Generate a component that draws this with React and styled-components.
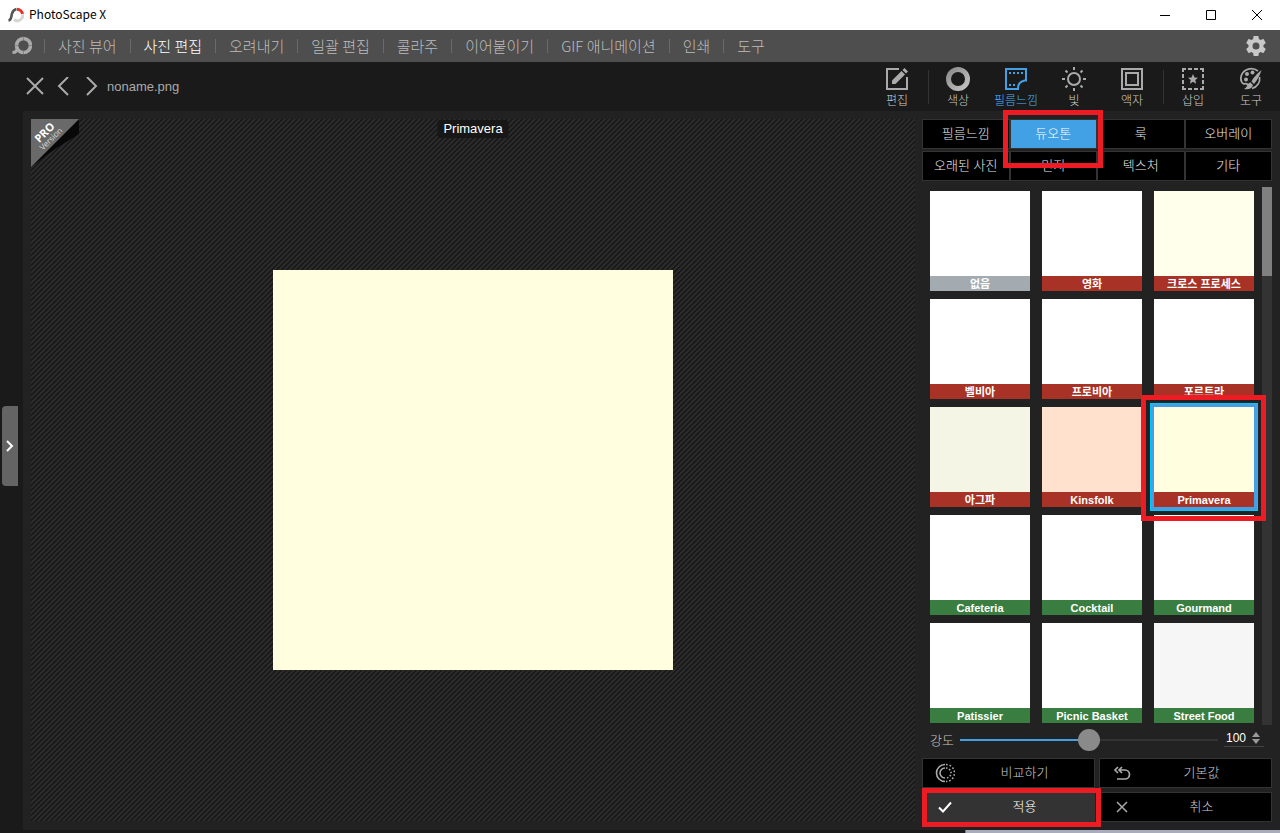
import React, { useState } from 'react'
import styled, { createGlobalStyle, css } from 'styled-components'

const GlobalStyle = createGlobalStyle`
*{
box-sizing:border-box;
}
body{
margin:0;
background:#1a1a1a;
color:#aaa;
font-family:"Liberation Sans","Noto Sans CJK KR",sans-serif;
font-size:13px;
}
button,input{
margin:0;
padding:0;
border:none;
background:none;
color:inherit;
font:inherit;
}
button{
cursor:pointer;
}
svg{
display:block;
}
`;

const Window = styled.div`
min-height:100vh;
display:flex;
flex-direction:column;
`;

const TitleBar = styled.header`
height:30px;
display:flex;
align-items:center;
background:#fff;
color:#000;
padding-left:8px;
`;
const Title = styled.h1`
flex:1;
margin:0 0 0 5px;
font-family:"Noto Sans CJK KR",sans-serif;
font-size:12px;
font-weight:400;
line-height:28px;
height:30px;
`;
const WindowButton = styled.button`
width:46px;
height:30px;
display:flex;
justify-content:center;
align-items:center;
`;

const MenuBar = styled.nav`
height:32px;
display:flex;
align-items:center;
background:#4e4e4e;
padding:0 14px 0 12px;
`;
const MenuLogo = styled.span`
width:32px;
`;
const MenuItem = styled.a`
border-left:1px solid #6a6a6a;
padding:0 13px;
font-family:"Noto Sans CJK KR",sans-serif;
font-size:15px;
font-weight:300;
line-height:14px;
white-space:nowrap;
text-decoration:none;
color:${props => props.$active ? "#fff" : "#bcbcbc"};
`;
const SettingsButton = styled.button`
margin-left:auto;
`;

const Workspace = styled.div`
position:relative;
flex:1;
display:flex;
flex-direction:column;
`;
const ToolBar = styled.div`
height:49px;
display:flex;
align-items:center;
`;
const FileNav = styled.div`
flex:1;
display:flex;
align-items:center;
padding-left:21px;
`;
const NavButton = styled.button`
width:28px;
height:24px;
display:flex;
justify-content:center;
align-items:center;
`;
const FileName = styled.span`
margin-left:2px;
`;
const Tool = styled.button`
width:58px;
height:49px;
padding-top:5px;
display:flex;
flex-direction:column;
align-items:center;
gap:3px;
font-size:12px;
font-weight:300;
line-height:14px;
color:${props => props.$active ? "#42a0e4" : "#aaa"};
`;
const ToolName = styled.span`
color:${props => props.$active ? "#4cb0f8" : "#ccc"};
`;
const ToolDivider = styled.span`
width:1px;
height:34px;
margin-left:2px;
background:#333;
`;

const Content = styled.main`
flex:1;
display:flex;
margin-left:23px;
background:#222;
`;
const StageWrap = styled.section`
flex:1;
display:flex;
padding:8px 7px 9px 8px;
`;
const Stage = styled.div`
position:relative;
flex:1;
display:flex;
justify-content:center;
align-items:center;
background:linear-gradient(135deg,#181818 0 25%,#2a2a2a 25% 55%,#181818 55% 75%,#2a2a2a 75%) 0 0/5px 5px;
`;
const Photo = styled.div`
width:400px;
height:400px;
background:#ffffdf;
`;
const FilterTag = styled.span`
position:absolute;
top:1px;
left:50%;
transform:translateX(-50%);
padding:0 6px;
border-radius:3px;
background:#171717;
color:#fff;
line-height:18px;
`;
const ProBadge = styled.div`
position:absolute;
top:0;
left:0;
`;
const DrawerHandle = styled.button`
position:absolute;
top:50%;
left:2px;
width:16px;
height:80px;
margin-top:-40px;
display:flex;
justify-content:center;
align-items:center;
border-radius:4px 0 0 4px;
background:#646464;
`;

const Panel = styled.aside`
width:358px;
padding:8px 8px 8px 0;
display:flex;
flex-direction:column;
`;
const Tabs = styled.div`
display:grid;
grid-template-columns:repeat(4,1fr);
row-gap:2px;
`;
const Tab = styled.button`
position:relative;
height:30px;
border:1px solid #333;
background:${props => props.$active ? "#42a0e4" : "#000"};
color:${props => props.$active ? "#fff" : "#e8e8e8"};
font-weight:300;
line-height:26px;
`;
const marks = {
  tab: css`inset:-10px -7px -20px -8px;`,
  filter: css`inset:-12px -12px -14px -13px;`,
  apply: css`inset:-5px -7px -6px -1px;`,
};
const Mark = styled.span`
position:absolute;
z-index:2;
border:5px solid #ed1c24;
pointer-events:none;
${props => marks[props.$kind]}
`;

const FilterArea = styled.div`
flex:1;
display:flex;
justify-content:space-between;
margin-top:6px;
`;
const FilterGrid = styled.div`
display:grid;
grid-template-columns:repeat(3,100px);
grid-auto-rows:100px;
gap:8px 12px;
padding:4px 0 2px 8px;
`;
const Filter = styled.button`
position:relative;
display:flex;
flex-direction:column;
background:${props => props.$color};
${props => props.$active && css`
box-shadow:0 0 0 3px #42a0e4,0 0 0 4px #00c8ff;
`}
`;
const FilterName = styled.span`
width:100%;
height:15px;
margin-top:auto;
background:${props => props.$tone};
color:#fff;
font-size:11px;
font-weight:700;
line-height:16px;
`;
const ScrollTrack = styled.div`
width:10px;
background:#333;
`;
const ScrollThumb = styled.div`
height:89px;
background:#808080;
`;

const AmountRow = styled.div`
height:33px;
display:flex;
align-items:center;
padding:0 8px 4px;
`;
const AmountLabel = styled.label`
width:30px;
color:#c4c4c4;
font-weight:300;
`;
const Slider = styled.input`
flex:1;
min-width:0;
height:22px;
appearance:none;
background:linear-gradient(to right,#42a0e4 50%,#333 50%) center/100% 2px no-repeat;
&::-webkit-slider-thumb{
appearance:none;
width:22px;
height:22px;
border-radius:50%;
background:#8a8a8a;
}
`;
const Stepper = styled.div`
width:40px;
height:18px;
margin:0 0 3px 6px;
display:flex;
align-items:center;
border-bottom:1px solid #444;
`;
const Amount = styled.input`
width:28px;
padding-left:2px;
color:#fff;
font-size:12px;
appearance:textfield;
&::-webkit-inner-spin-button{
appearance:none;
}
`;
const StepButtons = styled.div`
display:grid;
gap:2px;
`;

const Actions = styled.div`
display:grid;
grid-template-columns:1fr 1fr;
gap:4px;
`;
const Action = styled.button`
position:relative;
height:30px;
display:flex;
align-items:center;
padding-left:12px;
border:1px solid #333;
background:${props => props.$active ? "#333" : "#000"};
color:${props => props.$active ? "#fff" : "#aaa"};
font-weight:300;
line-height:26px;
`;
const ActionText = styled.span`
flex:1;
color:${props => props.$active ? "#fff" : "#ccc"};
`;

const Desktop = styled.footer`
height:3px;
display:flex;
background:#1a1a1a;
`;
const OtherWindow = styled.div`
width:315px;
margin-left:auto;
border-left:1px solid #777;
background:#a9adbb;
`;

const menu = ["사진 뷰어", "사진 편집", "오려내기", "일괄 편집", "콜라주", "이어붙이기", "GIF 애니메이션", "인쇄", "도구"];
const tabs = ["필름느낌", "듀오톤", "룩", "오버레이", "오래된 사진", "먼지", "텍스처", "기타"];

const RED = "#a93226";
const GREEN = "#3a7d40";
const filters = [
  { name: "없음", color: "#fff", tone: "#a4abb0" },
  { name: "영화", color: "#fff", tone: RED },
  { name: "크로스 프로세스", color: "#ffffec", tone: RED },
  { name: "벨비아", color: "#fff", tone: RED },
  { name: "프로비아", color: "#fff", tone: RED },
  { name: "포르트라", color: "#fff", tone: RED },
  { name: "아그파", color: "#f5f5e6", tone: RED },
  { name: "Kinsfolk", color: "#ffe1ce", tone: RED },
  { name: "Primavera", color: "#ffffdf", tone: RED },
  { name: "Cafeteria", color: "#fff", tone: GREEN },
  { name: "Cocktail", color: "#fff", tone: GREEN },
  { name: "Gourmand", color: "#fff", tone: GREEN },
  { name: "Patissier", color: "#fff", tone: GREEN },
  { name: "Picnic Basket", color: "#fff", tone: GREEN },
  { name: "Street Food", color: "#f6f6f6", tone: GREEN },
];

const Icon = ({ size = 24, width = 2, children }) => (
  <svg width={size} height={size} viewBox={`0 0 ${size} ${size}`} fill="none" stroke="currentColor" strokeWidth={width}>
    {children}
  </svg>
)

const AppLogo = () => (
  <Icon size={16} width={3}>
    <path d="M.500 13.500C4 13 3 9 4 6.500C4.800 4 6 2.500 8.500 2" stroke="#555" strokeWidth="2.600" />
    <path d="M9 2.200A5.600 5.600 0 0 1 14.500 7" stroke="#e53126" />
    <path d="M14.500 7.500A5.200 5.200 0 0 1 6 12.500" stroke="#d5d5d5" />
  </Icon>
)

const MenuLogoIcon = () => (
  <Icon size={20} width={3.6}>
    <circle cx="11.500" cy="9.500" r="7" />
    <path d="M5.500 11.500C5.500 14.500 4 16.500.500 16.500" strokeWidth="3.200" />
    <path d="M11.500.500v4M2.700 9.500h4M11.500 14.500v4M16.500 9.500h4" stroke="#6c6c6c" strokeWidth="0.600" />
  </Icon>
)

const EditIcon = () => (
  <Icon>
    <path d="M14 2H2v20h20V10" />
    <path d="M7 17v-3.500L16.500 4l3.500 3.500L10.500 17z" fill="currentColor" stroke="none" />
    <path d="M17.500 3L19.500 1L23 4.500L21 6.500z" fill="currentColor" stroke="none" />
  </Icon>
)
const ColorIcon = () => (
  <Icon width={5}>
    <defs>
      <linearGradient id="ring" x1="0" y1="0" x2="1" y2="1">
        <stop offset="0" stopColor="#8a8a8a" />
        <stop offset="1" stopColor="#c4c4c4" />
      </linearGradient>
    </defs>
    <circle cx="12" cy="12" r="9.500" stroke="url(#ring)" />
  </Icon>
)
const FilmIcon = () => (
  <Icon>
    <path d="M2 2h20v11.500H20.500C16.500 14.500 14 17 14 21V22H2z" />
    <path d="M5 6h14" strokeDasharray="2 2" />
    <path d="M5 18h7" strokeDasharray="2 2" />
  </Icon>
)
const LightIcon = () => (
  <Icon>
    <circle cx="12" cy="12" r="6" />
    <path d="M12 0v3M12 21v3M0 12h3M21 12h3M3.500 3.500l2 2M18.500 18.500l2 2M3.500 20.500l2-2M18.500 5.500l2-2" />
  </Icon>
)
const FrameIcon = () => (
  <Icon>
    <path d="M2 2h20v20H2zM6 6h12v12H6z" />
  </Icon>
)
const InsertIcon = () => (
  <Icon>
    <path d="M2 5V2h3M19 2h3v3M22 19v3h-3M5 22H2v-3M7 2h4M13 2h4M7 22h4M13 22h4M2 7v4M2 13v4M22 7v4M22 13v4" />
    <path d="M12 7l1.500 3.500 3.500.300-2.700 2.300.800 3.600L12 14.800l-3.100 1.900.800-3.600L7 10.800l3.500-.300z" fill="currentColor" stroke="none" />
  </Icon>
)
const PaletteIcon = () => (
  <Icon width={1.7}>
    <path d="M19 4C13-.500 5 2 2.500 8C1 13 3 16 5 17C8 16 10 18 10 21" />
    <path d="M20.500 10C21.500 15 18.500 20 13 21.500" />
    <circle cx="7" cy="12.500" r="2" fill="currentColor" stroke="none" />
    <circle cx="8" cy="7" r="2" fill="currentColor" stroke="none" />
    <circle cx="13.500" cy="5.500" r="2" fill="currentColor" stroke="none" />
    <path d="M22.500 3C20 5 14.500 10 12.500 14.500L15 17C18.500 13 21.500 7 22.500 3z" fill="currentColor" stroke="none" />
    <path d="M11.500 15.500l2.500 2.500C13 22 9 23 5 22C8.500 20.500 8 16 11.500 15.500z" fill="currentColor" stroke="none" />
  </Icon>
)
const GearIcon = () => (
  <svg width="20" height="20" viewBox="2 2 20 20" fill="#c8c8c8">
    <path d="M19.430 12.980c.040-.320.070-.640.070-.980s-.030-.660-.070-.980l2.110-1.650c.190-.150.240-.420.120-.640l-2-3.460c-.120-.220-.390-.300-.610-.220l-2.490 1c-.520-.400-1.080-.730-1.690-.980l-.380-2.650C14.460 2.180 14.250 2 14 2h-4c-.250 0-.460.180-.490.420l-.380 2.650c-.610.250-1.170.590-1.690.980l-2.490-1c-.230-.090-.490 0-.610.220l-2 3.460c-.130.220-.070.490.120.640l2.110 1.650c-.040.320-.070.650-.070.980s.030.660.070.980l-2.110 1.650c-.190.150-.240.420-.120.640l2 3.460c.120.220.390.300.610.220l2.490-1c.520.400 1.080.730 1.690.980l.380 2.650c.030.240.240.420.490.420h4c.250 0 .460-.180.490-.420l.380-2.650c.610-.250 1.170-.590 1.690-.980l2.490 1c.230.090.490 0 .610-.220l2-3.460c.120-.220.070-.490-.120-.640zM12 15.500a3.500 3.500 0 1 1 0-7 3.500 3.500 0 0 1 0 7z" />
  </svg>
)

const CompareIcon = () => (
  <Icon size={20} width={1.6}>
    <path d="M10 1.500a8.500 8.500 0 0 0 0 17M10 5a5 5 0 0 0 0 10" />
    <path d="M11 1.500a8.500 8.500 0 0 1 0 17" strokeDasharray="1.700 1.900" />
    <path d="M11 5a5 5 0 0 1 0 10" strokeDasharray="1.500 1.700" />
  </Icon>
)
const ResetIcon = () => (
  <Icon size={20} width={1.7}>
    <path d="M6 4L3 7L6 10M10 4L7 7L10 10M7 7h6a4.500 4.500 0 0 1 0 9H5" />
  </Icon>
)
const CheckIcon = () => (
  <Icon size={20}>
    <path d="M4 10.500l4 4L16 5.500" />
  </Icon>
)
const CancelIcon = () => (
  <Icon size={20} width={1.5}>
    <path d="M5 5l10 10M15 5L5 15" />
  </Icon>
)

const tools = [
  { name: "편집", icon: <EditIcon />, divider: true },
  { name: "색상", icon: <ColorIcon /> },
  { name: "필름느낌", icon: <FilmIcon /> },
  { name: "빛", icon: <LightIcon /> },
  { name: "액자", icon: <FrameIcon />, divider: true },
  { name: "삽입", icon: <InsertIcon /> },
  { name: "도구", icon: <PaletteIcon /> },
];

const App = () => {
  const [tool, setTool] = useState("필름느낌");
  const [tab, setTab] = useState("듀오톤");
  const [filter, setFilter] = useState("Primavera");
  const [amount, setAmount] = useState(100);

  const changeAmount = (value) => {
    setAmount(Math.max(0, Math.min(200, Number(value))));
  }

  return (
    <Window>
      <GlobalStyle />
      <TitleBar>
        <AppLogo />
        <Title>PhotoScape X</Title>
        <WindowButton aria-label="Minimize">
          <Icon size={10} width={1}><path d="M0 5.500h10" /></Icon>
        </WindowButton>
        <WindowButton aria-label="Maximize">
          <Icon size={10} width={1}><path d="M.500.500h9v9h-9z" /></Icon>
        </WindowButton>
        <WindowButton aria-label="Close">
          <Icon size={10} width={1}><path d="M0 0l10 10M10 0L0 10" /></Icon>
        </WindowButton>
      </TitleBar>

      <MenuBar>
        <MenuLogo><MenuLogoIcon /></MenuLogo>
        {menu.map((item) => (
          <MenuItem key={item} href="#" $active={item === "사진 편집"}>{item}</MenuItem>
        ))}
        <SettingsButton aria-label="Settings"><GearIcon /></SettingsButton>
      </MenuBar>

      <Workspace>
        <ToolBar>
          <FileNav>
            <NavButton aria-label="Close file">
              <Icon size={20}><path d="M2 1l16 16M18 1L2 17" /></Icon>
            </NavButton>
            <NavButton aria-label="Previous">
              <Icon size={20}><path d="M15 0L6 9l9 9" /></Icon>
            </NavButton>
            <NavButton aria-label="Next">
              <Icon size={20}><path d="M6 0l9 9-9 9" /></Icon>
            </NavButton>
            <FileName>noname.png</FileName>
          </FileNav>
          {tools.map((item) => (
            <React.Fragment key={item.name}>
              <Tool $active={tool === item.name} onClick={() => setTool(item.name)}>
                {item.icon}
                <ToolName $active={tool === item.name}>{item.name}</ToolName>
              </Tool>
              {item.divider && <ToolDivider />}
            </React.Fragment>
          ))}
        </ToolBar>

        <Content>
          <StageWrap>
            <Stage>
              <Photo />
              <FilterTag>{filter}</FilterTag>
              <ProBadge>
                <svg width="48" height="48" viewBox="0 0 48 48">
                  <path d="M48 0v15L24 30L0 48z" fill="#080808" />
                  <path d="M0 0h48L0 48z" fill="#696969" />
                  <g transform="rotate(-45)" textAnchor="middle" fontFamily="Open Sans">
                    <text x="0" y="23" fontSize="11" fontWeight="700" fill="#fff">PRO</text>
                    <text x="0" y="31" fontSize="8" fill="#ddd">Version</text>
                  </g>
                </svg>
              </ProBadge>
            </Stage>
          </StageWrap>

          <Panel>
            <Tabs>
              {tabs.map((item) => (
                <Tab key={item} $active={tab === item} onClick={() => setTab(item)}>
                  {item}
                  {tab === item && <Mark $kind="tab" />}
                </Tab>
              ))}
            </Tabs>

            <FilterArea>
              <FilterGrid>
                {filters.map((item) => (
                  <Filter
                    key={item.name}
                    $color={item.color}
                    $active={filter === item.name}
                    onClick={() => setFilter(item.name)}
                  >
                    <FilterName $tone={item.tone}>{item.name}</FilterName>
                    {filter === item.name && <Mark $kind="filter" />}
                  </Filter>
                ))}
              </FilterGrid>
              <ScrollTrack><ScrollThumb /></ScrollTrack>
            </FilterArea>

            <AmountRow>
              <AmountLabel htmlFor="amount">강도</AmountLabel>
              <Slider id="amount" type="range" min="0" max="200" value={amount} onChange={(e) => changeAmount(e.target.value)} />
              <Stepper>
                <Amount type="number" aria-label="강도" value={amount} onChange={(e) => changeAmount(e.target.value)} />
                <StepButtons>
                  <button aria-label="Increase" onClick={() => changeAmount(amount + 1)}>
                    <svg width="8" height="5" viewBox="0 0 8 5" fill="#999"><path d="M4 0l4 5H0z" /></svg>
                  </button>
                  <button aria-label="Decrease" onClick={() => changeAmount(amount - 1)}>
                    <svg width="8" height="5" viewBox="0 0 8 5" fill="#999"><path d="M0 0h8L4 5z" /></svg>
                  </button>
                </StepButtons>
              </Stepper>
            </AmountRow>

            <Actions>
              <Action><CompareIcon /><ActionText>비교하기</ActionText></Action>
              <Action><ResetIcon /><ActionText>기본값</ActionText></Action>
              <Action $active><CheckIcon /><ActionText $active>적용</ActionText><Mark $kind="apply" /></Action>
              <Action><CancelIcon /><ActionText>취소</ActionText></Action>
            </Actions>
          </Panel>
        </Content>

        <DrawerHandle aria-label="Open drawer">
          <svg width="10" height="14" viewBox="0 0 10 14" fill="none" stroke="#fff" strokeWidth="2"><path d="M2 2l5 5-5 5" /></svg>
        </DrawerHandle>
      </Workspace>

      <Desktop><OtherWindow /></Desktop>
    </Window>
  )
}

export default App;
